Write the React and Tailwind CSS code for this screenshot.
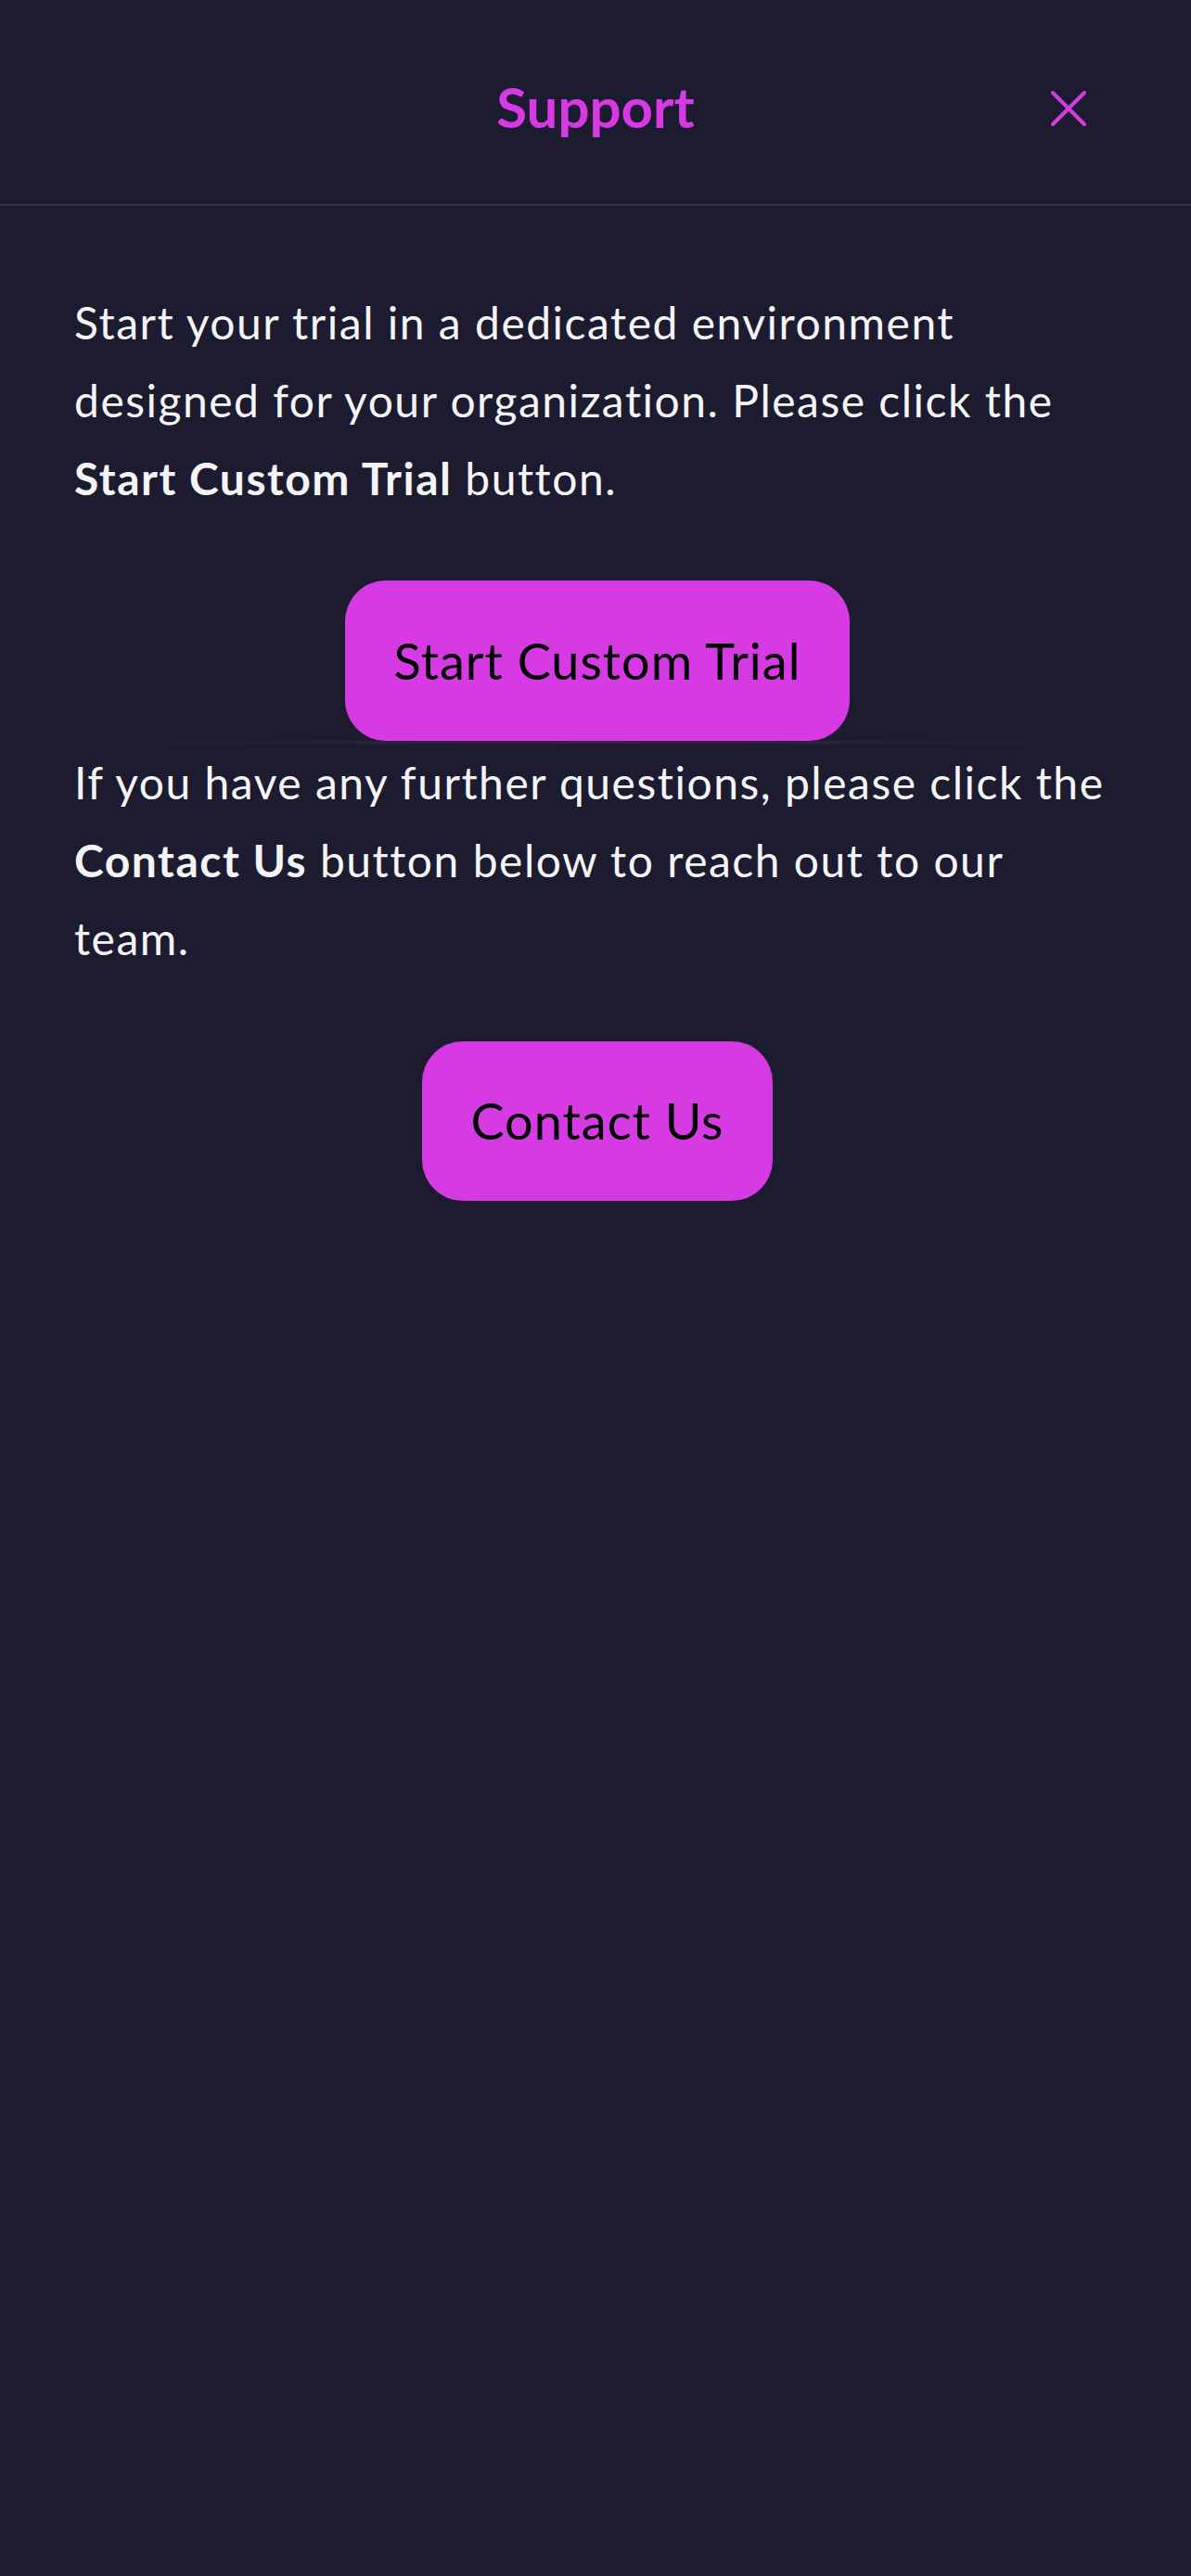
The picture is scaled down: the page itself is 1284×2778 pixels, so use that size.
import React from "react";

function CloseIcon() {
  return (
    <svg width="40" height="40" viewBox="0 0 40 40" fill="none">
      <path d="M3 3 L37 37 M37 3 L3 37" stroke="#d63be3" strokeWidth="4" strokeLinecap="round" />
    </svg>
  );
}

export default function App() {
  return (
    <div
      className="min-h-screen w-full bg-[#1c1b2f] text-white"
      style={{ fontFamily: "Lato, 'Noto Sans', sans-serif" }}
    >
      <header className="relative flex h-[222px] items-center justify-center border-b-2 border-[#34334a] pt-[10px]">
        <h1 className="text-[60px] font-bold leading-none text-[#d63be3]">Support</h1>
        <button className="absolute right-[112px] top-[97px] flex h-[40px] w-[40px] items-center justify-center">
          <CloseIcon />
        </button>
      </header>

      <main className="pl-[80px] pr-[76px] pt-[84px]">
        <p className="text-[48px] leading-[84px] tracking-[1.5px] text-[#f4f4f6]">
          Start your trial in a dedicated environment designed for your organization. Please click the{" "}
          <span className="font-bold">Start Custom Trial</span> button.
        </p>

        <div className="mt-[68px] flex justify-center">
          <button className="h-[173px] rounded-[44px] bg-[#d63be3] px-[53px] text-[54px] leading-none tracking-[1px] text-black">
            Start Custom Trial
          </button>
        </div>
        <div className="h-[3px] bg-gradient-to-r from-transparent via-[#3a2148] to-transparent" />

        <p className="text-[48px] leading-[84px] tracking-[1.5px] text-[#f4f4f6]">
          If you have any further questions, please click the{" "}
          <span className="font-bold">Contact Us</span> button below to reach out to our team.
        </p>

        <div className="mt-[69px] flex justify-center">
          <button className="h-[172px] rounded-[44px] bg-[#d63be3] px-[53px] text-[54px] leading-none tracking-[1px] text-black">
            Contact Us
          </button>
        </div>
      </main>
    </div>
  );
}
